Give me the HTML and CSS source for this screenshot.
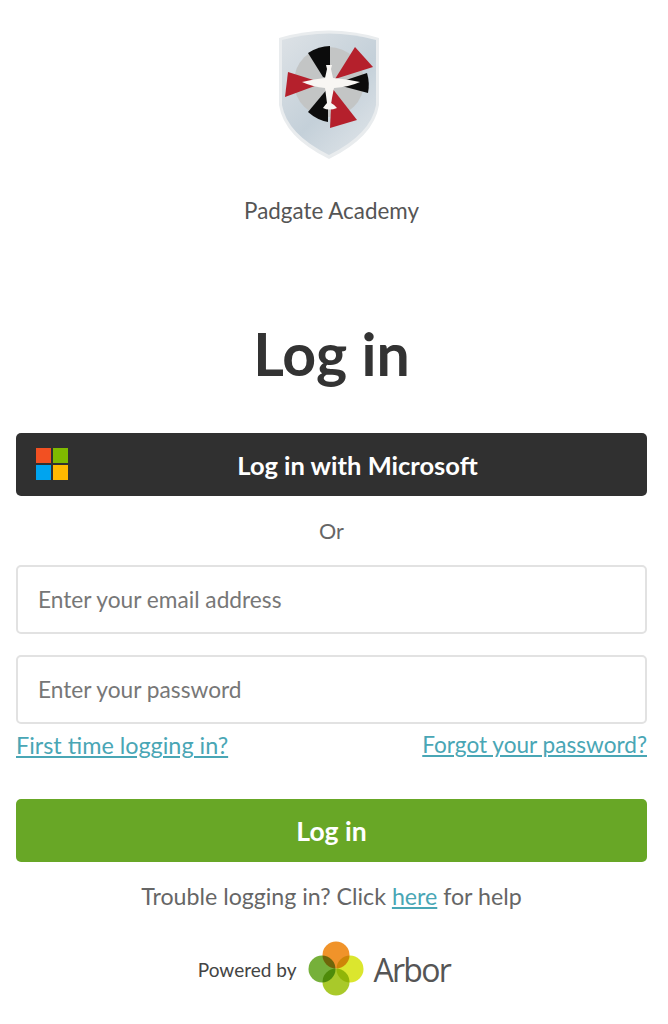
FILE: index.html
```html
<!DOCTYPE html>
<html lang="en">
<head>
<meta charset="utf-8">
<title>Log in</title>
<link rel="stylesheet" href="styles.css">
</head>
<body>
<main class="page">
  <header class="school">
    <svg class="crest" viewBox="0 0 100 130" width="100" height="130">
      <defs>
        <linearGradient id="shield" x1="0" y1="0" x2="0.8" y2="1">
          <stop offset="0" stop-color="#dde2e6"/>
          <stop offset="0.6" stop-color="#c4d0d9"/>
          <stop offset="1" stop-color="#dce2e7"/>
        </linearGradient>
      </defs>
      <path d="M0 9 Q50 -6 100 9 L100 76 Q95 108 50 130 Q5 108 0 76 Z" fill="#e9ecee"/>
      <path d="M3 11 Q50 -2 97 11 L97 76 Q92 105 50 126 Q8 105 3 76 Z" fill="url(#shield)"/>
      <circle cx="50" cy="53" r="35" fill="#c3c5c5"/>
      <path d="M51 50 L44 48 L29 24 Q40 17 51 17 Z" fill="#0c0c0c"/>
      <path d="M56 50 L76 18 L94 38 Z" fill="#b5202c"/>
      <path d="M55 55 L88 44 Q91 54 89 64 Z" fill="#0c0c0c"/>
      <path d="M44 54 L9 43 L6 68 Z" fill="#b5202c"/>
      <path d="M49 59 L29 83 Q38 91 49 93 Z" fill="#0c0c0c"/>
      <path d="M53 59 L78 91 L51 99 Z" fill="#b5202c"/>
      <path d="M23 53 Q35 50 46 49 L48 40 L47 36 L53 36 L52 40 L54 49 Q68 50 81 53 Q70 58 55 59 L52 74 Q56 76 58 79 Q50 82 44 79 Q46 76 48 74 L46 59 Q34 58 23 53 Z" fill="#f8f6f3"/>
    </svg>
    <p class="school-name">Padgate Academy</p>
  </header>

  <h1 class="title">Log in</h1>

  <a class="btn btn-dark" href="#">
    <svg class="ms-logo" viewBox="0 0 32 32" width="32" height="32">
      <rect width="15" height="15" fill="#f25022"/>
      <rect x="17" width="15" height="15" fill="#7fba00"/>
      <rect y="17" width="15" height="15" fill="#00a4ef"/>
      <rect x="17" y="17" width="15" height="15" fill="#ffb900"/>
    </svg>
    <span class="btn-label">Log in with Microsoft</span>
  </a>

  <p class="or">Or</p>

  <form class="form">
    <input class="field" type="email" placeholder="Enter your email address">
    <input class="field" type="password" placeholder="Enter your password">
  </form>

  <div class="links">
    <a class="link" href="#">First time logging in?</a>
    <a class="link link-forgot" href="#">Forgot your password?</a>
  </div>

  <a class="btn btn-green" href="#">Log in</a>

  <p class="help">Trouble logging in? Click <a class="link" href="#">here</a> for help</p>

  <footer class="powered">
    <span class="powered-by">Powered by</span>
    <svg class="arbor-mark" viewBox="0 0 56 56" width="56" height="56">
      <circle class="petal" cx="28" cy="14" r="13.5" fill="#f0932a"/>
      <circle class="petal" cx="42" cy="28" r="13.5" fill="#dbe62e"/>
      <circle class="petal" cx="28" cy="41" r="13.5" fill="#a9c92a"/>
      <circle class="petal" cx="14" cy="28" r="13.5" fill="#76b03a"/>
    </svg>
    <span class="arbor-name">Arbor</span>
  </footer>
</main>
</body>
</html>
```
FILE: styles.css
```css
* { box-sizing: border-box; }
html, body { margin: 0; background: #fff; }
body { font-family: "Lato", "Noto Sans", sans-serif; color: #333; }
.page { display: flex; flex-direction: column; padding: 29px 21px 0 16px; height: 1024px; overflow: hidden; }
.school { display: flex; flex-direction: column; align-items: center; }
.crest { display: block; margin-right: 5px; filter: blur(0.5px); }
.school-name { margin: 38px 0 0; font-size: 22.4px; line-height: 28px; color: #555; }
.title { margin: 94px 0 0; font-size: 59px; line-height: 70px; font-weight: 700; text-align: center; color: #333; }
.btn { display: flex; align-items: center; justify-content: center; height: 63px; border-radius: 5px; color: #fff; font-size: 25.5px; font-weight: 700; text-decoration: none; }
.btn-dark { position: relative; margin-top: 44px; background: #303030; padding-left: 52px; }
.ms-logo { position: absolute; left: 20px; top: 15px; }
.or { margin: 21px 0 0; font-size: 21.5px; line-height: 28px; text-align: center; color: #666; }
.form { display: flex; flex-direction: column; gap: 21px; margin-top: 20px; }
.field { height: 69px; padding: 0 20px; border: 2px solid #e2e2e2; border-radius: 5px; font: 22.7px "Lato", "Noto Sans", sans-serif; background: #fff; }
.field::placeholder { color: #777; opacity: 1; }
.links { display: flex; justify-content: space-between; margin-top: 7px; font-size: 23.4px; line-height: 28px; }
.link { color: #49a6b5; text-decoration: underline; }
.link-forgot { font-size: 22.6px; }
.btn-green { margin-top: 40px; background: #68a726; font-size: 26.5px; }
.help { margin: 20px 0 0; font-size: 23.2px; line-height: 28px; text-align: center; color: #666; }
.powered { display: flex; align-items: center; justify-content: center; margin-top: 31px; padding-right: 15px; }
.powered-by { font-size: 19px; color: #444; margin-right: 12px; }
.arbor-mark { display: block; isolation: isolate; filter: blur(0.4px); }
.petal { mix-blend-mode: multiply; }
.arbor-name { margin-left: 9px; font-family: "Open Sans", sans-serif; font-size: 32px; font-weight: 500; letter-spacing: -1.7px; color: #555; }
```
